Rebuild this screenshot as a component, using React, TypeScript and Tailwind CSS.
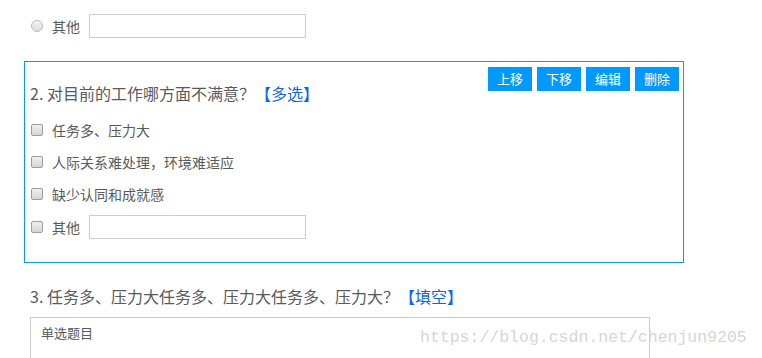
import React from 'react';

const options = ['任务多、压力大', '人际关系难处理，环境难适应', '缺少认同和成就感'];
const actions = ['上移', '下移', '编辑', '删除'];

function Radio() {
  return (
    <span className="inline-block w-[12px] h-[12px] rounded-full border border-[#b8b8b8] bg-gradient-to-b from-[#f4f4f4] to-[#dcdcdc]" />
  );
}

function Checkbox() {
  return (
    <span className="inline-block w-[12px] h-[12px] rounded-[2px] border border-[#9d9d9d] bg-gradient-to-b from-[#f0f0f0] to-[#d6d6d6]" />
  );
}

export default function App() {
  return (
    <div
      className="relative w-[762px] h-[358px] overflow-hidden bg-white text-[#5a5a5a]"
      style={{ fontFamily: '"Microsoft YaHei", "Noto Sans CJK SC", sans-serif' }}
    >
      {/* 上一题的“其他”选项 */}
      <div className="flex items-center pl-[31px] pt-[14px] h-[38px]">
        <Radio />
        <span className="ml-[9px] text-[14px] leading-6">其他</span>
        <input className="ml-[9px] w-[217px] h-[24px] border border-[#ccc] outline-none" />
      </div>

      {/* 当前选中的题目 */}
      <div className="relative ml-[24px] mt-[23px] w-[660px] border border-[#0099ff] pl-[5px] pt-[19px] pb-[20px]">
        <div className="absolute top-[5px] right-[4px] flex gap-[5px]">
          {actions.map((a) => (
            <button
              key={a}
              className="w-[44px] h-[24px] bg-[#0099ff] text-white text-[13px] leading-[24px]"
            >
              {a}
            </button>
          ))}
        </div>
        <div className="text-[16px] leading-6">
          2. 对目前的工作哪方面不满意？<span className="text-[#0a66f0]">【多选】</span>
        </div>
        <div className="mt-[9px] ml-[1px]">
          {options.map((o) => (
            <div key={o} className="flex items-center h-[32px]">
              <Checkbox />
              <span className="ml-[9px] text-[14px]">{o}</span>
            </div>
          ))}
          <div className="flex items-center h-[32px] pt-[2px]">
            <Checkbox />
            <span className="ml-[9px] text-[14px]">其他</span>
            <input className="ml-[9px] w-[217px] h-[24px] border border-[#ccc] outline-none" />
          </div>
        </div>
      </div>

      {/* 第三题 */}
      <div className="pl-[30px] mt-[21px]">
        <div className="text-[16px] leading-6">
          3. 任务多、压力大任务多、压力大任务多、压力大？<span className="text-[#0a66f0]">【填空】</span>
        </div>
        <div className="mt-[9px] w-[620px] h-[80px] border border-[#ccc] pl-[10px] pt-[6px]">
          <div className="text-[13px] leading-[18px]">单选题目</div>
        </div>
      </div>

      <div
        className="absolute left-[420px] top-[327px] text-[16.5px] leading-[22px] text-[#d6d6d6] whitespace-nowrap"
        style={{ fontFamily: '"Liberation Mono", monospace' }}
      >
        https://blog.csdn.net/chenjun9205
      </div>
    </div>
  );
}
